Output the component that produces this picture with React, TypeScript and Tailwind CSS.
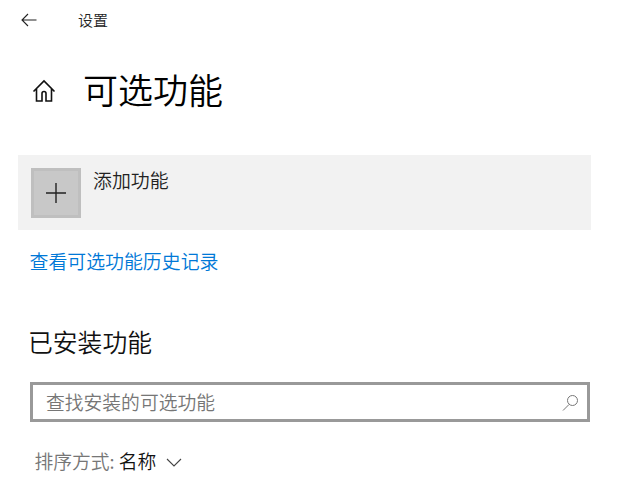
const App = () => {
  return (
    <div className="h-[493px] w-[624px] overflow-hidden bg-white font-['Noto_Sans_CJK_SC','Liberation_Sans',sans-serif] font-[350] text-black">

      <div className="flex h-[40px] items-center pl-[21px]">
        <svg width="16" height="14" viewBox="0 0 16 14" fill="none" stroke="#222" strokeWidth="1.1">
          <path d="M15.5 7H1M7 1 1 7l6 6" />
        </svg>
        <span className="ml-[41px] text-[15px] leading-[20px] text-[#222]">设置</span>
      </div>

      <div className="mt-[28px] flex h-[42px] items-center pl-[32px]">
        <svg className="mt-[3px]" width="24" height="24" viewBox="0 0 24 24" fill="none" stroke="#111" strokeWidth="1.6">
          <path d="M1.5 12.5 12 2l10.5 10.5M4.5 10v12h5.5v-7.5q0-2 2-2t2 2V22h5.5V10" />
        </svg>
        <h1 className="ml-[27px] text-[35px] leading-[42px] font-[350]">可选功能</h1>
      </div>

      <div className="mx-[18px] mt-[45px] flex h-[75px] w-[573px] gap-[12px] bg-[#f2f2f2] px-[13px] pt-[13px]">
        <div className="flex size-[50px] items-center justify-center border-[3px] border-[#bfbfbf] bg-[#c8c8c8]">
          <svg width="20" height="20" viewBox="0 0 20 20" fill="none" stroke="#222" strokeWidth="1.4">
            <path d="M10 0v20M0 10h20" />
          </svg>
        </div>
        <span className="-mt-px text-[18.9px] leading-[26px] text-[#222]">添加功能</span>
      </div>

      <a className="mt-[17px] ml-[29.5px] block text-[18.9px] leading-[27px] text-[#0078d7]">查看可选功能历史记录</a>

      <h2 className="mt-[49px] ml-[28px] text-[24.8px] leading-[36px] font-[350] text-[#111]">已安装功能</h2>

      <div className="mt-[23px] ml-[30px] flex h-[40px] w-[560px] items-center justify-between border-[3px] border-[#999999] pr-[8px] pl-[13px]">
        <span className="text-[18.8px] leading-[26px] text-[#767676]">查找安装的可选功能</span>
        <svg width="17" height="17" viewBox="0 0 17 17" fill="none" stroke="#777" strokeWidth="1">
          <circle cx="10.5" cy="6.5" r="5" />
          <path d="M7 10.5 1 16.5" />
        </svg>
      </div>

      <div className="mt-[26px] ml-[34.5px] flex items-center text-[18.8px] leading-[26px]">
        <span className="text-[#767676]">排序方式:</span>
        <span className="ml-[4px] text-[#111]">名称</span>
        <svg className="mt-[2px] ml-[10px]" width="16" height="9" viewBox="0 0 16 9" fill="none" stroke="#444" strokeWidth="1.1">
          <path d="m1 1 7 7 7-7" />
        </svg>
      </div>

    </div>
  );
};

export default App;
